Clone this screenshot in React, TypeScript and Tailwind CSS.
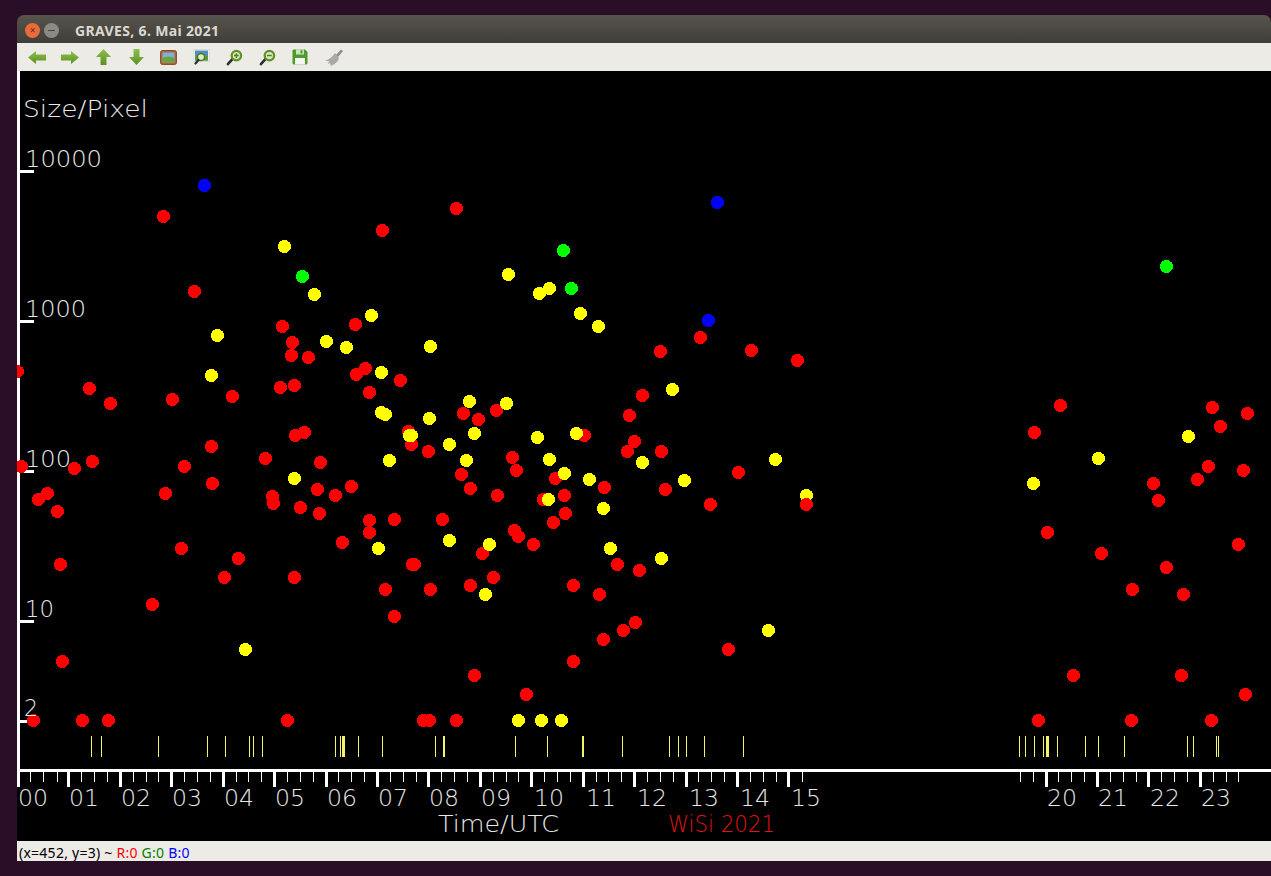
const RED = [
  [17, 371], [21, 466], [33, 720], [38, 499], [47, 493], [57, 511], [60, 564], [62, 661], [74, 468], [82, 720], [89, 388], [92, 461],
  [108, 720], [110, 403], [152, 604], [163, 216], [165, 493], [172, 399], [181, 548], [184, 466], [194, 291], [211, 446], [212, 483],
  [224, 577], [232, 396], [238, 558], [265, 458], [272, 496], [273, 503], [280, 387], [282, 326], [287, 720], [291, 355], [292, 342],
  [294, 385], [294, 577], [295, 435], [300, 507], [304, 432], [308, 357], [317, 489], [319, 513], [320, 462], [335, 495], [342, 542],
  [351, 486], [355, 324], [356, 374], [365, 368], [369, 392], [369, 520], [369, 532], [382, 230], [385, 589], [394, 616], [394, 519],
  [400, 380], [408, 431], [411, 444], [412, 564], [414, 564], [423, 720], [429, 720], [428, 451], [430, 589], [442, 519], [456, 208],
  [456, 720], [461, 474], [463, 413], [470, 488], [470, 585], [474, 675], [478, 419], [482, 553], [493, 577], [496, 410], [497, 495],
  [512, 457], [514, 530], [516, 470], [518, 536], [526, 694], [533, 544], [543, 499], [553, 522], [555, 478], [564, 495], [565, 513],
  [573, 661], [573, 585], [584, 435], [599, 594], [603, 639], [604, 487], [617, 564], [623, 630], [627, 451], [629, 415], [634, 441],
  [635, 622], [639, 570], [642, 395], [660, 351], [661, 451], [665, 489], [700, 337], [710, 504], [728, 649], [738, 472], [751, 350],
  [797, 360], [1034, 432], [1038, 720], [1047, 532], [1060, 405], [1073, 675], [1101, 553], [1131, 720], [1132, 589], [1153, 483],
  [1158, 500], [1166, 567], [1181, 675], [1183, 594], [1197, 479], [1208, 466], [1211, 720], [1212, 407], [1220, 426], [1238, 544],
  [1243, 470], [1245, 694], [1247, 413],
];
const YELLOW = [
  [245, 649], [284, 246], [294, 478], [314, 294], [326, 341], [346, 347], [371, 315], [378, 548], [381, 372], [381, 412], [385, 414],
  [389, 460], [409, 435], [411, 435], [217, 335], [211, 375], [429, 418], [430, 346], [449, 444], [449, 540], [466, 460], [469, 401],
  [474, 433], [485, 594], [489, 544], [506, 403], [508, 274], [518, 720], [537, 437], [539, 293], [541, 720], [548, 499], [549, 288],
  [549, 459], [561, 720], [564, 473], [576, 433], [580, 313], [589, 479], [598, 326], [603, 508], [610, 548], [642, 462], [661, 558],
  [672, 389], [684, 480], [768, 630], [775, 459], [1033, 483], [1098, 458], [1188, 436],
];
const GREEN = [[302, 276], [563, 250], [571, 288], [1166, 266]];
const BLUE = [[204, 185], [717, 202], [708, 320]];

const METEORS = [
  91, 101, 158, 207, 225, 249, 253, 262, 335, 340, 342, 343, 344, 358, 382, 435, 443, 444, 515, 547, 582, 583, 622, 669, 678, 686, 704,
  743, 1019, 1025, 1034, 1043, 1046, 1047, 1048, 1057, 1085, 1098, 1124, 1187, 1193, 1216, 1218,
];
const MAJOR = [18, 68, 120, 171, 223, 274, 326, 377, 428, 480, 531, 583, 634, 686, 737, 788, 1046, 1097, 1148, 1200];
const MINOR = [
  30, 43, 57, 81, 94, 107, 133, 146, 158, 184, 197, 210, 236, 248, 261, 287, 300, 313, 338, 351, 364, 390, 403, 416, 441, 454, 467,
  493, 506, 518, 544, 557, 570, 596, 608, 621, 647, 660, 673, 698, 711, 724, 750, 763, 776, 802, 1020, 1033, 1058, 1071, 1084, 1110,
  1123, 1136, 1161, 1174, 1187, 1213, 1226, 1238,
];
const Y_TICKS = [171, 321, 471, 621, 721];
const HOURS = [
  ["00", 18], ["01", 69], ["02", 121], ["03", 172], ["04", 224], ["05", 275], ["06", 327], ["07", 378], ["08", 429], ["09", 481],
  ["10", 534], ["11", 586], ["12", 637], ["13", 689], ["14", 740], ["15", 791], ["20", 1047], ["21", 1098], ["22", 1150], ["23", 1201],
] as const;

function Label({ x, y, w, fill = "#e8e8e8", children }: { x: number; y: number; w: number; fill?: string; children: string }) {
  return (
    <text x={x} y={y} textLength={w} lengthAdjust="spacingAndGlyphs" fill={fill} className="font-['DejaVu_Sans',sans-serif] font-extralight text-[23px]">
      {children}
    </text>
  );
}

function Dots({ items, fill }: { items: number[][]; fill: string }) {
  return (
    <g fill={fill} shapeRendering="crispEdges">
      {items.map(([x, y]) => (
        <circle key={`${x}-${y}`} cx={x + 0.5} cy={y + 0.5} r="6.5" />
      ))}
    </g>
  );
}

function Plot() {
  return (
    <svg viewBox="17 71 1254 770" className="block h-[770px] w-full bg-black">
      <rect x="17" y="71" width="3" height="700" fill="#fff" />
      <rect x="17" y="769" width="1254" height="3" fill="#fff" />
      {Y_TICKS.map((y) => (
        <rect key={y} x="20" y={y - 1} width="14" height="3" fill="#fff" />
      ))}
      {MAJOR.map((x) => (
        <rect key={x} x={x - 1} y="771" width="3" height="16" fill="#fff" />
      ))}
      {MINOR.map((x) => (
        <rect key={x} x={x} y="771" width="1" height="11" fill="#fff" />
      ))}
      {METEORS.map((x) => (
        <rect key={x} x={x} y="736" width="1" height="21" fill="#f4f46a" />
      ))}
      <Dots items={[[806, 495]]} fill="#ffff00" />
      <Dots items={[[806, 504]]} fill="#ff0000" />
      <Dots items={RED} fill="#ff0000" />
      <Dots items={YELLOW} fill="#ffff00" />
      <Dots items={GREEN} fill="#00ff00" />
      <Dots items={BLUE} fill="#0000ff" />
      <Label x={23} y={117} w={125}>Size/Pixel</Label>
      <Label x={25} y={167} w={77}>10000</Label>
      <Label x={25} y={317} w={61}>1000</Label>
      <Label x={25} y={467} w={46}>100</Label>
      <Label x={25} y={617} w={29}>10</Label>
      <Label x={24} y={716} w={14}>2</Label>
      {HOURS.map(([h, x]) => (
        <Label key={h} x={x} y={806} w={30}>{h}</Label>
      ))}
      <Label x={438} y={832} w={121}>Time/UTC</Label>
      <Label x={668} y={832} w={107} fill="#e01414">WiSi 2021</Label>
    </svg>
  );
}

function Arrow({ d, w, h, id }: { d: string; w: number; h: number; id: string }) {
  return (
    <svg width={w} height={h} viewBox={`0 0 ${w} ${h}`}>
      <defs>
        <linearGradient id={id} x1="0" y1="0" x2="0" y2="1">
          <stop offset="0" stopColor="#8fc04f" />
          <stop offset="1" stopColor="#5a9122" />
        </linearGradient>
      </defs>
      <path d={d} fill={`url(#${id})`} strokeLinejoin="round" />
    </svg>
  );
}

function Loupe({ sign }: { sign: "+" | "-" }) {
  return (
    <svg width="17" height="17" viewBox="0 0 18 18">
      <path d="M2 16 L7 10.5" stroke="#2f2f2f" strokeWidth="2.8" strokeLinecap="round" />
      <circle cx="11" cy="7" r="5" fill="#dbe8c0" stroke="#5f9128" strokeWidth="2.4" />
      <path d={sign === "+" ? "M8.5 7 H13.5 M11 4.5 V9.5" : "M8.5 7 H13.5"} stroke="#4f7f1c" strokeWidth="1.6" />
    </svg>
  );
}

function Toolbar() {
  return (
    <div className="flex h-7 items-center bg-[#edebe6] pl-[11px]">
      <div className="flex w-[33px]"><Arrow id="al" w={18} h={13} d="M0 6.5 L8 0 V3.5 H18 V9.5 H8 V13 Z" /></div>
      <div className="flex w-[33px]"><Arrow id="ar" w={18} h={13} d="M18 6.5 L10 0 V3.5 H0 V9.5 H10 V13 Z" /></div>
      <div className="flex w-[33px] pl-[2px]"><Arrow id="au" w={15} h={16} d="M7.5 0 L15 8 H10.5 V16 H4.5 V8 H0 Z" /></div>
      <div className="flex w-[33px] pl-[2px]"><Arrow id="ad" w={15} h={16} d="M7.5 16 L15 8 H10.5 V0 H4.5 V8 H0 Z" /></div>
      <div className="flex w-[33px]">
        <svg width="17" height="15" viewBox="0 0 17 15">
          <rect x="0.5" y="0.5" width="16" height="14" rx="2" fill="#a8643a" stroke="#8a4f2b" />
          <rect x="2.5" y="2.5" width="12" height="10" fill="#7fb2d8" />
          <path d="M2.5 8 Q8.5 5 14.5 8 V12.5 H2.5 Z" fill="#6da33a" />
        </svg>
      </div>
      <div className="flex w-[33px]">
        <svg width="17" height="16" viewBox="0 0 17 16">
          <rect x="1" y="0.5" width="15" height="12" fill="#fff" stroke="#c9c9c9" strokeWidth="0.6" />
          <rect x="2" y="1.5" width="13" height="10" fill="#4f8fc0" />
          <path d="M2 7 Q8 5 15 7 V11.5 H2 Z" fill="#5f9a34" />
          <circle cx="8" cy="8" r="3.6" fill="#dfeccb" stroke="#4a7a1c" strokeWidth="1.5" />
          <path d="M2.5 14.5 L5.5 11" stroke="#2f2f2f" strokeWidth="2.2" strokeLinecap="round" />
        </svg>
      </div>
      <div className="flex w-[33px]"><Loupe sign="+" /></div>
      <div className="flex w-[33px]"><Loupe sign="-" /></div>
      <div className="flex w-[33px]">
        <svg width="16" height="16" viewBox="0 0 16 16">
          <path d="M1.5 0.5 H13 L15.5 3 V14 Q15.5 15.5 14 15.5 H2 Q0.5 15.5 0.5 14 V1.5 Z" fill="#4e9a2a" />
          <rect x="4" y="0.5" width="8" height="5" fill="#cfe3bd" />
          <rect x="8.5" y="1.3" width="2" height="3.2" fill="#4e9a2a" />
          <rect x="3" y="9" width="10" height="6.5" fill="#f4f4f0" />
        </svg>
      </div>
      <svg width="18" height="17" viewBox="0 0 18 17">
        <path d="M11 6 L16 0.5 L18 2 L13 8 Z" fill="#8d8d8a" />
        <path d="M10 4 L14 9 C13 13 10 15 6 17 L5 14 L3 15 L4 12 L0 12 C5 10 8 7 10 4 Z" fill="#a9a9a5" />
      </svg>
    </div>
  );
}

export default function App() {
  return (
    <div className="h-[876px] w-full overflow-hidden bg-[#2a0d26] pl-[17px] pt-[15px]">
      <div className="w-[1254px] overflow-hidden rounded-t-[7px]">
        <div className="flex h-7 items-center bg-gradient-to-b from-[#57544c] to-[#3f3e39] pl-2 pt-[2px] font-['Noto_Sans','Open_Sans',sans-serif]">
          <span className="flex h-[15px] w-[15px] items-center justify-center rounded-full bg-[#ea6a3a] text-[10px] leading-none text-[#6e2a10]">×</span>
          <span className="ml-[4px] flex h-[15px] w-[15px] items-center justify-center rounded-full bg-[#8b8a84]">
            <span className="h-px w-[7px] bg-[#45443f]" />
          </span>
          <span className="ml-4 text-[14px] font-bold tracking-[0.35px] text-[#dcd8cf]">GRAVES, 6. Mai 2021</span>
        </div>
        <Toolbar />
        <Plot />
        <div className="flex h-5 items-center overflow-hidden bg-[#edebe6] pl-[2px] pt-[3px] font-['Noto_Sans','Open_Sans',sans-serif] text-[14px] tracking-[0.25px] text-black">
          <span>(x=452, y=3) ~&nbsp;</span>
          <span className="text-[#ff0000]">R:0</span>
          <span className="text-[#008000]">&nbsp;G:0</span>
          <span className="text-[#0000ff]">&nbsp;B:0</span>
        </div>
      </div>
    </div>
  );
}
